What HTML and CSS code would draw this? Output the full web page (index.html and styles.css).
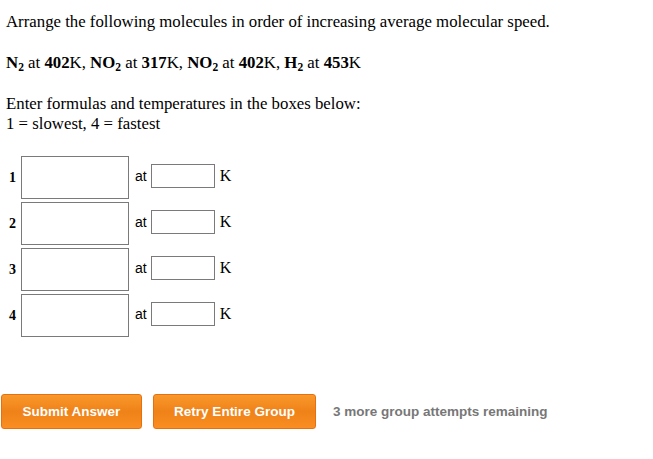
FILE: index.html
```html
<!DOCTYPE html>
<html>
<head>
    <title>Molecular speed</title>
    <link rel="stylesheet" href="styles.css">
</head>
<body>
    <div class="question">
        <p>Arrange the following molecules in order of increasing average molecular speed.</p>

        <p class="molecules"><b>N<sub>2</sub></b> at <b>402</b>K, <b>NO<sub>2</sub></b> at <b>317</b>K, <b>NO<sub>2</sub></b> at <b>402</b>K, <b>H<sub>2</sub></b> at <b>453</b>K</p>

        <p>Enter formulas and temperatures in the boxes below:<br>1 = slowest, 4 = fastest</p>

        <!-- 入力欄 -->
        <div class="answers">
            <div class="answer-row">
                <span class="rank">1</span>
                <input type="text" class="formula">
                <span class="at">at</span>
                <input type="text" class="temp">
                <span class="unit">K</span>
            </div>
            <div class="answer-row">
                <span class="rank">2</span>
                <input type="text" class="formula">
                <span class="at">at</span>
                <input type="text" class="temp">
                <span class="unit">K</span>
            </div>
            <div class="answer-row">
                <span class="rank">3</span>
                <input type="text" class="formula">
                <span class="at">at</span>
                <input type="text" class="temp">
                <span class="unit">K</span>
            </div>
            <div class="answer-row">
                <span class="rank">4</span>
                <input type="text" class="formula">
                <span class="at">at</span>
                <input type="text" class="temp">
                <span class="unit">K</span>
            </div>
        </div>
    </div>

    <!-- ボタン -->
    <div class="actions">
        <button class="btn btn-submit">Submit Answer</button>
        <button class="btn btn-retry">Retry Entire Group</button>
        <span class="attempts">3 more group attempts remaining</span>
    </div>
</body>
</html>
```

FILE: styles.css
```css
body {
    margin: 0;
    padding: 0;
    background-color: #fff;
    color: #000;
    font-family: "Liberation Serif", "Times New Roman", serif;
    font-size: 16.8px;
    line-height: 20px;
}
.question {
    padding: 12px 6px 0 6px;
}
p {
    margin: 0 0 21px 0;
}
sub {
    font-size: 11.5px;
    line-height: 0;
    vertical-align: -3px;
}
.answers {
    display: flex;
    flex-direction: column;
    gap: 3px;
    margin-top: 22px;
}
.answer-row {
    display: flex;
    align-items: center;
}
.rank {
    width: 12px;
    padding-left: 3px;
    font-weight: bold;
    font-size: 14px;
}
input[type="text"] {
    box-sizing: border-box;
    border: 1px solid #7a7a7a;
    border-radius: 0;
    margin: 0;
    padding: 2px;
    outline: none;
    background-color: #fff;
}
.formula {
    width: 108px;
    height: 43px;
}
.at {
    font-family: "Liberation Sans", Arial, sans-serif;
    font-size: 14px;
    margin: 0 4px 4px 6px;
}
.temp {
    width: 64px;
    height: 24px;
    border-radius: 2px;
    margin-bottom: 4px !important;
}
.unit {
    font-size: 16px;
    margin: 0 0 4px 5px;
}
.actions {
    display: flex;
    align-items: center;
    margin-top: 57px;
    padding-left: 1px;
}
.btn {
    height: 35px;
    padding: 0;
    border: 1px solid #e5700d;
    border-radius: 3px;
    background: linear-gradient(#f9982c, #ef8218 50%, #fa8e22);
    color: #fff;
    font-family: "Liberation Sans", Arial, sans-serif;
    font-size: 13.5px;
    font-weight: bold;
    cursor: pointer;
    box-shadow: 0 1px 1px rgba(0, 0, 0, 0.08);
}
.btn:hover {
    background: #e97a12;
}
.btn-submit {
    width: 141px;
}
.btn-retry {
    width: 163px;
    margin-left: 11px;
}
.attempts {
    margin-left: 17px;
    color: #777;
    font-family: "Liberation Sans", Arial, sans-serif;
    font-size: 13.5px;
    font-weight: bold;
}
```
